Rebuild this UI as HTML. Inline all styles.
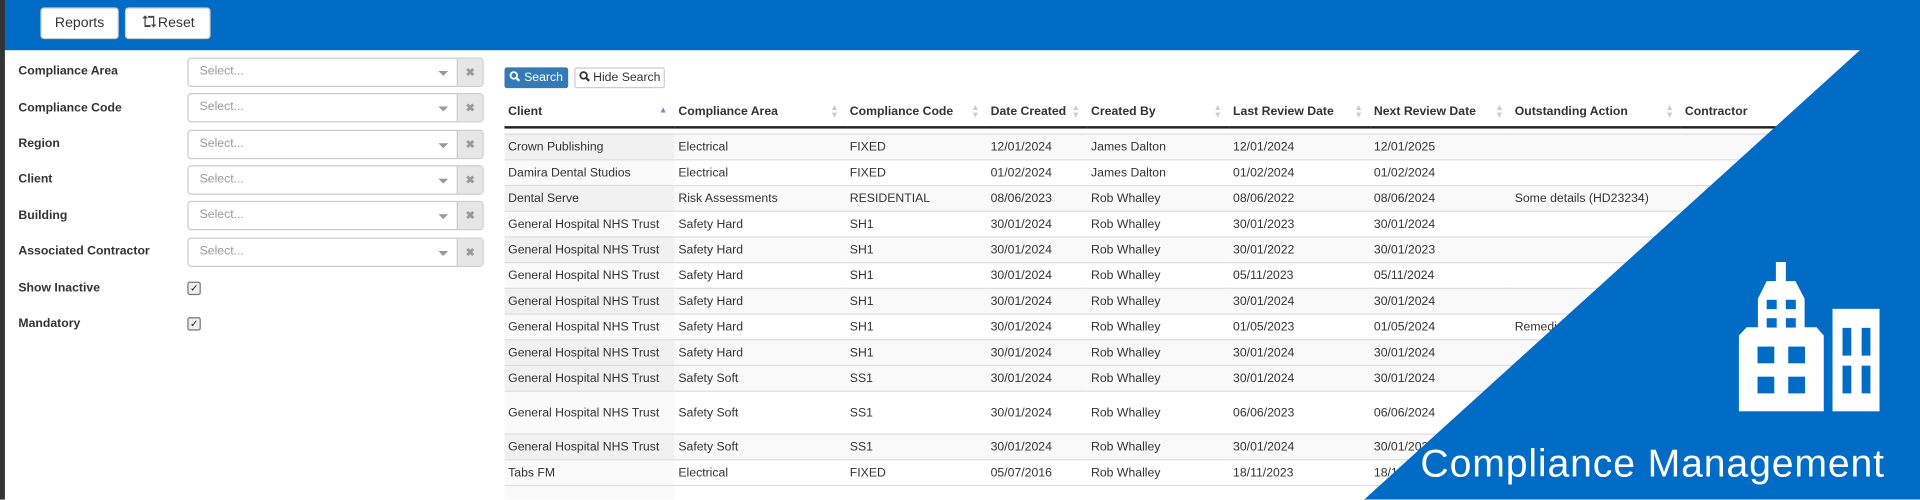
<!DOCTYPE html>
<html><head><meta charset="utf-8"><style>
html,body{margin:0;padding:0;width:1920px;height:500px;overflow:hidden;background:#fff}
#s{position:absolute;left:0;top:0;width:1568px;height:408px;transform:scale(1.22449);transform-origin:0 0;font-family:"Liberation Sans",Arial,sans-serif;color:#333;overflow:hidden;background:#fff}
.abs{position:absolute}
.top{left:0;top:0;width:1568px;height:41px;background:#006cc5}
.btn{position:absolute;top:6px;height:26px;background:#fff;border:1px solid #ccc;border-radius:3px;font-size:11.5px;line-height:25px;text-align:center;color:#333;box-sizing:border-box}
.lbl{position:absolute;left:15px;font-size:10px;font-weight:bold;color:#333}
.sel{position:absolute;left:153px;width:242px;height:24px;border:1px solid #ccc;border-radius:3px;box-sizing:border-box;background:#fff}
.sel span{position:absolute;left:9px;top:5px;font-size:10px;color:#999}
.sel i{position:absolute;left:204px;top:10px;width:0;height:0;border-left:4px solid transparent;border-right:4px solid transparent;border-top:4px solid #999}
.sel b{position:absolute;right:0;top:0;width:20px;height:22px;background:#e6e6e6;border-left:1px solid #ccc;font-size:9px;color:#999;text-align:center;line-height:22px}
.cb{position:absolute;left:153px;width:9px;height:9px;border:1px solid #777;border-radius:2px;background:#eee;font-size:8px;line-height:9px;text-align:center;color:#222}
table{position:absolute;left:412px;top:80px;border-collapse:collapse;font-size:10px;table-layout:fixed}
th{font-weight:bold;text-align:left;height:23px;padding:0 3px;border-bottom:2px solid #222;position:relative}
td{padding:0 3px;border-top:1px solid #ddd;height:20px;white-space:nowrap;overflow:hidden}
tr.sp td{padding:0;border:0;height:4px}
tr.o td{background:#f9f9f9}
tr.o td:first-child{background:#f1f1f1}
tr.e td:first-child{background:#fafafa}
.ar{position:absolute;right:6px;top:6px;font-size:7px;line-height:6px;color:#ccc}
.ar.a{color:#8080d8;top:8px}
</style></head><body><div id="s">
<div class="abs top"></div>
<div class="abs" style="left:0;top:0;width:4px;height:408px;background:#333"></div>
<div class="btn" style="left:33px;width:64px">Reports</div>
<div class="btn" style="left:102px;width:70px"><svg width="14" height="11" viewBox="0 0 14 11" style="vertical-align:-1px"><path d="M3 10V3H1.2L3.5 0.5 5.8 3H4V8.5H8V10Z M11 1V8H12.8L10.5 10.5 8.2 8H10V2.5H6V1Z" fill="#444"/></svg>Reset</div>

<div class="lbl" style="top:53px">Compliance Area</div>
<div class="lbl" style="top:83px">Compliance Code</div>
<div class="lbl" style="top:112px">Region</div>
<div class="lbl" style="top:141px">Client</div>
<div class="lbl" style="top:171px">Building</div>
<div class="lbl" style="top:200px">Associated Contractor</div>
<div class="lbl" style="top:230px">Show Inactive</div>
<div class="lbl" style="top:259px">Mandatory</div>
<div class="sel" style="top:47px"><span>Select...</span><i></i><b>✖</b></div>
<div class="sel" style="top:76px"><span>Select...</span><i></i><b>✖</b></div>
<div class="sel" style="top:106px"><span>Select...</span><i></i><b>✖</b></div>
<div class="sel" style="top:135px"><span>Select...</span><i></i><b>✖</b></div>
<div class="sel" style="top:164px"><span>Select...</span><i></i><b>✖</b></div>
<div class="sel" style="top:194px"><span>Select...</span><i></i><b>✖</b></div>
<div class="cb" style="top:230px">✓</div>
<div class="cb" style="top:259px">✓</div>

<div class="abs" style="left:412px;top:55px;width:52px;height:17px;background:#337ab7;border-radius:2px;color:#fff;font-size:10px;line-height:17px;text-align:center;white-space:nowrap"><svg width="9" height="9" viewBox="0 0 10 10" style="vertical-align:-1px"><circle cx="4" cy="4" r="3" fill="none" stroke="#fff" stroke-width="1.6"/><path d="M6 6L9 9" stroke="#fff" stroke-width="2"/></svg> Search</div>
<div class="abs" style="left:469px;top:55px;width:74px;height:17px;border:1px solid #ccc;box-sizing:border-box;border-radius:2px;font-size:10px;line-height:15px;text-align:center;white-space:nowrap"><svg width="9" height="9" viewBox="0 0 10 10" style="vertical-align:-1px"><circle cx="4" cy="4" r="3" fill="none" stroke="#333" stroke-width="1.6"/><path d="M6 6L9 9" stroke="#333" stroke-width="2"/></svg> Hide Search</div>

<table>
<colgroup><col style="width:139px"><col style="width:140px"><col style="width:115px"><col style="width:82px"><col style="width:116px"><col style="width:115px"><col style="width:115px"><col style="width:139px"><col style="width:130px"></colgroup>
<tr><th>Client<span class="ar a">▲</span></th><th>Compliance Area<span class="ar">▲<br>▼</span></th><th>Compliance Code<span class="ar">▲<br>▼</span></th><th>Date Created<span class="ar">▲<br>▼</span></th><th>Created By<span class="ar">▲<br>▼</span></th><th>Last Review Date<span class="ar">▲<br>▼</span></th><th>Next Review Date<span class="ar">▲<br>▼</span></th><th>Outstanding Action<span class="ar">▲<br>▼</span></th><th>Contractor</th></tr>
<tr class="sp"><td colspan="9"></td></tr>
<tr class="o"><td>Crown Publishing</td><td>Electrical</td><td>FIXED</td><td>12/01/2024</td><td>James Dalton</td><td>12/01/2024</td><td>12/01/2025</td><td></td><td></td></tr>
<tr class="e"><td>Damira Dental Studios</td><td>Electrical</td><td>FIXED</td><td>01/02/2024</td><td>James Dalton</td><td>01/02/2024</td><td>01/02/2024</td><td></td><td></td></tr>
<tr class="o"><td>Dental Serve</td><td>Risk Assessments</td><td>RESIDENTIAL</td><td>08/06/2023</td><td>Rob Whalley</td><td>08/06/2022</td><td>08/06/2024</td><td>Some details (HD23234)</td><td></td></tr>
<tr class="e"><td>General Hospital NHS Trust</td><td>Safety Hard</td><td>SH1</td><td>30/01/2024</td><td>Rob Whalley</td><td>30/01/2023</td><td>30/01/2024</td><td></td><td></td></tr>
<tr class="o"><td>General Hospital NHS Trust</td><td>Safety Hard</td><td>SH1</td><td>30/01/2024</td><td>Rob Whalley</td><td>30/01/2022</td><td>30/01/2023</td><td></td><td></td></tr>
<tr class="e"><td>General Hospital NHS Trust</td><td>Safety Hard</td><td>SH1</td><td>30/01/2024</td><td>Rob Whalley</td><td>05/11/2023</td><td>05/11/2024</td><td></td><td></td></tr>
<tr class="o"><td>General Hospital NHS Trust</td><td>Safety Hard</td><td>SH1</td><td>30/01/2024</td><td>Rob Whalley</td><td>30/01/2024</td><td>30/01/2024</td><td></td><td></td></tr>
<tr class="e"><td>General Hospital NHS Trust</td><td>Safety Hard</td><td>SH1</td><td>30/01/2024</td><td>Rob Whalley</td><td>01/05/2023</td><td>01/05/2024</td><td>Remedial</td><td></td></tr>
<tr class="o"><td>General Hospital NHS Trust</td><td>Safety Hard</td><td>SH1</td><td>30/01/2024</td><td>Rob Whalley</td><td>30/01/2024</td><td>30/01/2024</td><td></td><td></td></tr>
<tr class="o"><td>General Hospital NHS Trust</td><td>Safety Soft</td><td>SS1</td><td>30/01/2024</td><td>Rob Whalley</td><td>30/01/2024</td><td>30/01/2024</td><td></td><td></td></tr>
<tr class="e"><td style="height:34px">General Hospital NHS Trust</td><td>Safety Soft</td><td>SS1</td><td>30/01/2024</td><td>Rob Whalley</td><td>06/06/2023</td><td>06/06/2024</td><td></td><td></td></tr>
<tr class="o"><td>General Hospital NHS Trust</td><td>Safety Soft</td><td>SS1</td><td>30/01/2024</td><td>Rob Whalley</td><td>30/01/2024</td><td>30/01/2024</td><td></td><td></td></tr>
<tr class="e"><td>Tabs FM</td><td>Electrical</td><td>FIXED</td><td>05/07/2016</td><td>Rob Whalley</td><td>18/11/2023</td><td>18/11/2024</td><td></td><td></td></tr>
<tr class="e"><td>&nbsp;</td><td></td><td></td><td></td><td></td><td></td><td></td><td></td><td></td></tr>
</table>

<svg class="abs" style="left:0;top:0" width="1568" height="408"><polygon points="1520,40 1568,40 1568,408 1114,408" fill="#006cc5"/></svg>
<svg class="abs" style="left:1420px;top:214px" width="115" height="122" viewBox="1110 785 353 447" preserveAspectRatio="none">
<g fill="#fff">
<rect x="1203" y="785" width="25" height="60"/>
<polygon points="1180,842 1252,842 1275,895 1275,985 1158,985 1158,895"/>
<polygon points="1130,980 1305,980 1323,1005 1323,1232 1110,1232 1110,1005"/>
<rect x="1345" y="925" width="118" height="307"/>
</g>
<g fill="#006cc5">
<rect x="1180" y="898" width="25" height="28"/><rect x="1228" y="898" width="25" height="28"/>
<rect x="1180" y="953" width="25" height="28"/><rect x="1228" y="953" width="25" height="28"/>
<rect x="1157" y="1038" width="42" height="50"/><rect x="1234" y="1038" width="42" height="50"/>
<rect x="1157" y="1128" width="42" height="50"/><rect x="1234" y="1128" width="42" height="50"/>
<rect x="1370" y="982" width="22" height="83"/><rect x="1418" y="982" width="22" height="83"/>
<rect x="1370" y="1095" width="22" height="83"/><rect x="1418" y="1095" width="22" height="83"/>
</g></svg>
<div class="abs" style="left:1160px;top:358px;font-size:32px;line-height:40px;color:#fff;letter-spacing:0.7px;white-space:nowrap">Compliance Management</div>
</div></body></html>
